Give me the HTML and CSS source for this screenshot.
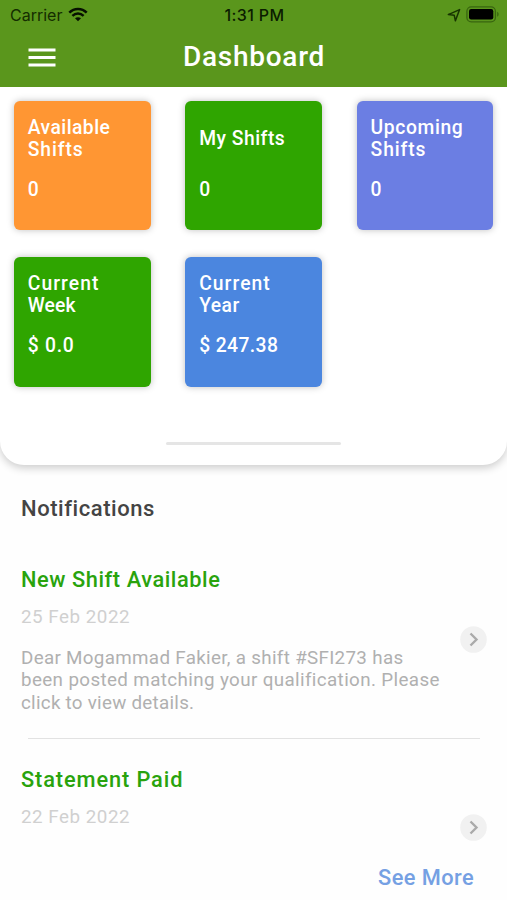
FILE: index.html
```html
<!DOCTYPE html>
<html lang="en">
<head>
<meta charset="utf-8">
<title>Dashboard</title>
<link rel="stylesheet" href="styles.css">
</head>
<body>
<header class="topbar">
  <div class="status">
    <div class="status-left">
      <span class="carrier">Carrier</span>
      <svg class="wifi" width="20" height="15" viewBox="0 0 21 16"><g fill="none" stroke="#061000" stroke-width="2.6"><path d="M1.2 6.1C6.4.8 14.6.8 19.8 6.1"/><path d="M4.5 9.5C8 6.2 13 6.2 16.5 9.5"/></g><path fill="#061000" d="M10.5 15.2 7.3 12c1.8-1.6 4.6-1.6 6.4 0z"/></svg>
    </div>
    <span class="time">1:31 PM</span>
    <div class="status-right">
      <svg width="14" height="14" viewBox="0 0 14 14"><path d="M1.3 6.6 12.6 1.6 8.4 12.8 7.2 7.2z" fill="none" stroke="#173400" stroke-width="1.5" stroke-linejoin="round"/></svg>
      <svg width="34" height="17" viewBox="0 0 34 17"><rect x=".9" y=".8" width="28.5" height="15" rx="4.4" fill="none" stroke="#38650f" stroke-width="1.3"/><rect x="3" y="3" width="24.3" height="10.5" rx="2.2" fill="#000"/><path d="M31.2 5.7c1.9.8 1.9 4.2 0 5z" fill="#38650f"/></svg>
    </div>
  </div>
  <div class="nav">
    <svg class="menu" width="28" height="20" viewBox="0 0 28 20"><path d="M.5 2h27M.5 9.5h27M.5 17h27" stroke="#fff" stroke-width="3"/></svg>
    <h1><span class="t-dashboard">Dashboard</span></h1>
  </div>
</header>
<main>
  <section class="panel">
    <div class="cards">
      <div class="card orange"><div class="label"><span class="t-available">Available</span><br><span class="t-shifts">Shifts</span></div><div class="value">0</div></div>
      <div class="card green"><div class="label"><span class="t-my">My Shifts</span></div><div class="value">0</div></div>
      <div class="card indigo"><div class="label"><span class="t-upcoming">Upcoming</span><br><span class="t-shifts">Shifts</span></div><div class="value">0</div></div>
      <div class="card green"><div class="label"><span class="t-current">Current</span><br><span class="t-week">Week</span></div><div class="value t-week-value">$ 0.0</div></div>
      <div class="card blue"><div class="label"><span class="t-current">Current</span><br><span class="t-year">Year</span></div><div class="value t-year-value">$ 247.38</div></div>
    </div>
    <div class="handle"></div>
  </section>
  <section class="notifications">
    <h2 class="t-notifications">Notifications</h2>
    <article class="item">
      <div class="text">
        <h3 class="t-new">New Shift Available</h3>
        <div class="date">25 Feb 2022</div>
        <p><span class="t-line1">Dear Mogammad Fakier, a shift #SFI273 has</span><br><span class="t-line2">been posted matching your qualification. Please</span><br><span class="t-line3">click to view details.</span></p>
      </div>
      <svg class="go" width="27" height="27" viewBox="0 0 27 27"><circle cx="13.5" cy="13.5" r="13.3" fill="#f1f1f1"/><path d="m10.5 7.5 6 6-6 6" fill="none" stroke="#aaa" stroke-width="2.4"/></svg>
    </article>
    <div class="divider"></div>
    <article class="item">
      <div class="text">
        <h3 class="t-paid">Statement Paid</h3>
        <div class="date">22 Feb 2022</div>
      </div>
      <svg class="go go-second" width="27" height="27" viewBox="0 0 27 27"><circle cx="13.5" cy="13.5" r="13.3" fill="#f1f1f1"/><path d="m10.5 7.5 6 6-6 6" fill="none" stroke="#aaa" stroke-width="2.4"/></svg>
    </article>
    <div class="more"><span class="t-more">See More</span></div>
  </section>
</main>
</body>
</html>
```
FILE: styles.css
```css
* { box-sizing: border-box; }
body { margin: 0; height: 900px; overflow: hidden; background: #fefefe; font-family: Roboto, "Liberation Sans", sans-serif; }
h1, h2, h3, p { margin: 0; font-weight: 500; }
svg { display: block; }
.topbar { height: 87px; background: #5a961c; }
.status { height: 29px; display: grid; grid-template-columns: 1fr auto 1fr; align-items: center; padding: 0 7px 0 10px; font-family: Inter, sans-serif; font-size: 16px; color: #142d00; }
.status-left, .status-right { display: flex; align-items: center; gap: 6px; }
.status-right { justify-content: flex-end; gap: 5px; }
.wifi { margin-bottom: 1px; }
.time { font-weight: 500; color: #0b1c00; letter-spacing: .4px; margin-right: 1px; }
.nav { height: 57px; display: grid; grid-template-columns: 28px 1fr 28px; align-items: center; padding: 0 28px; }
h1 { padding-bottom: 2px; text-align: center; color: #fff; font-size: 27px; line-height: 32px; }
.t-dashboard { font-size: 28px; letter-spacing: .75px; margin-right: -1px; }
.panel { height: 378px; padding: 13.5px 14px 0; background: #fff; border-radius: 0 0 24px 24px; box-shadow: 0 3px 9px rgba(0,0,0,.2); clip-path: inset(0 0 -20px); }
.cards { display: grid; grid-template-columns: repeat(3, 136.6px); grid-auto-rows: 129.5px; gap: 27px 34.8px; }
.card { padding: 16px 13.8px; border-radius: 6px; box-shadow: 0 0 7px rgba(0,0,0,.25); color: #fff; font-size: 19.3px; font-weight: 500; line-height: 22.3px; }
.label { height: 44.6px; display: flex; flex-direction: column; justify-content: center; }
.label br { display: none; }
.value { margin-top: 17.5px; }
.t-available { letter-spacing: .45px; }
.t-shifts { letter-spacing: .9px; }
.t-my { letter-spacing: .5px; }
.t-upcoming { letter-spacing: .62px; }
.t-current { letter-spacing: 1.05px; }
.t-week { letter-spacing: .1px; }
.t-year { letter-spacing: .45px; }
.t-week-value { letter-spacing: .75px; }
.t-year-value { letter-spacing: .4px; }
.orange { background: #ff9633; }
.green { background: #2fa500; }
.indigo { background: #6b7ee3; }
.blue { background: #4b86df; }
.handle { width: 175px; height: 3px; margin: 55px auto 0; background: #e5e5e5; border-radius: 2px; }
.notifications { padding: 31px 20px 0 21px; }
h2 { font-size: 22px; line-height: 26px; color: #444; }
.t-notifications { letter-spacing: .55px; }
.item { display: flex; justify-content: space-between; }
.text { white-space: nowrap; padding-top: 45px; }
h3 { font-size: 21.8px; line-height: 26px; color: #29a30d; }
.t-new { letter-spacing: .57px; }
.t-paid { letter-spacing: .88px; }
.date { margin-top: 13px; font-size: 18.8px; line-height: 23px; color: #d0d0d0; letter-spacing: .52px; }
p { margin-top: 18px; font-size: 18.8px; font-weight: 400; line-height: 22.4px; color: #b0b0b0; }
.t-line1 { letter-spacing: .32px; }
.t-line2 { letter-spacing: .38px; }
.t-line3 { letter-spacing: .27px; }
.go { flex: none; margin-top: 104px; }
.divider { height: 1.5px; margin: 23.4px 7px 0; background: #e2e2e2; }
.divider + .item .text { padding-top: 28px; }
.go-second { margin-top: 75px; }
.more { margin-top: 24px; padding-right: 13px; text-align: right; font-size: 21.8px; font-weight: 500; line-height: 26px; color: #75a0e3; }
.t-more { letter-spacing: .42px; }
```
